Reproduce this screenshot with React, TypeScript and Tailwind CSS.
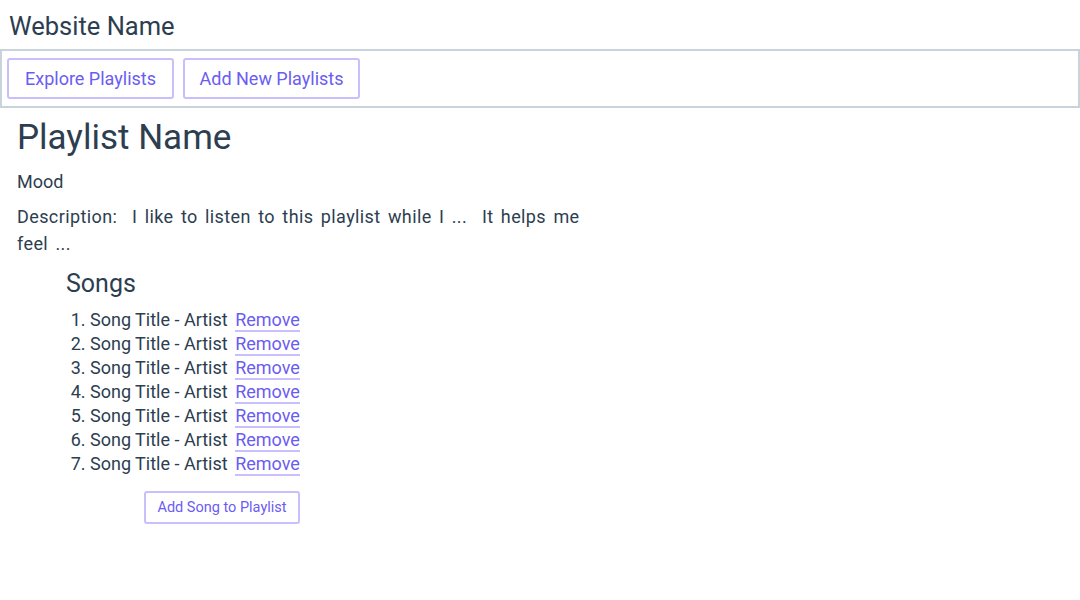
import React from "react";

export default function App() {
  const songs = Array.from({ length: 7 }, (_, i) => i + 1);
  return (
    <div className="min-h-[600px] w-[1080px] bg-white text-[#2c3e50]" style={{ fontFamily: "Roboto, 'Noto Sans', sans-serif" }}>
      <h1 className="pl-[9px] pt-[11px] text-[25.5px] leading-[30px] h-[49px]">Website Name</h1>
      <nav className="flex h-[59px] items-center gap-[9px] border-2 border-[#c8d3dc] px-[5px]">
        <button className="h-[41px] w-[167px] rounded-[3px] border-2 border-[#c9bffc] text-[18px] text-[#6b5cf2]">
          Explore Playlists
        </button>
        <button className="h-[41px] w-[177px] rounded-[3px] border-2 border-[#c9bffc] text-[18px] text-[#6b5cf2]">
          Add New Playlists
        </button>
      </nav>
      <main className="pl-[17px] pt-[10px]">
        <h2 className="text-[35px] leading-[40px]">Playlist Name</h2>
        <p className="mt-[11px] text-[18px] leading-[26px]">Mood</p>
        <p className="mt-[8px] w-[595px] text-[18px] leading-[27px] tracking-[0.4px] [word-spacing:2.5px]">
          Description:&nbsp; I like to listen to this playlist while I ...&nbsp; It helps me feel ...
        </p>
        <section className="pl-[49px] pt-[11px]">
          <h3 className="text-[25px] leading-[32px]">Songs</h3>
          <ol className="mt-[8px] list-decimal pl-[24px] text-[18px] leading-[24px]">
            {songs.map((n) => (
              <li key={n}>
                Song Title - Artist{" "}
                <a href="#" className="ml-[3px] border-b-2 border-[#c9bffc] text-[#6b5cf2]">
                  Remove
                </a>
              </li>
            ))}
          </ol>
          <button className="ml-[78px] mt-[15px] h-[33px] w-[156px] rounded-[3px] border-2 border-[#c9bffc] text-[14.5px] text-[#6b5cf2]">
            Add Song to Playlist
          </button>
        </section>
      </main>
    </div>
  );
}
